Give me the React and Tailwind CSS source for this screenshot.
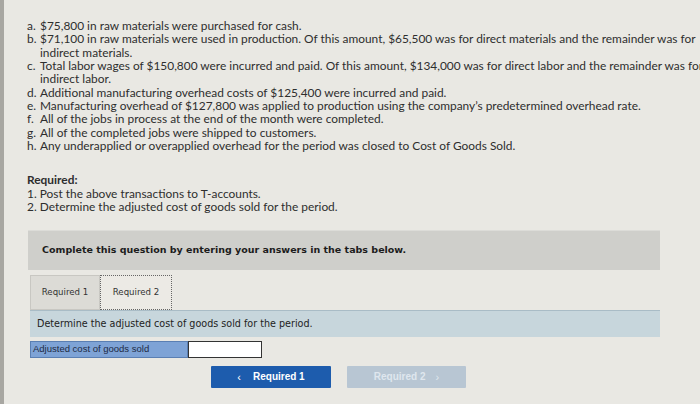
export default function App() {
  const items = [
    ['a.', ['$75,800 in raw materials were purchased for cash.']],
    ['b.', ['$71,100 in raw materials were used in production. Of this amount, $65,500 was for direct materials and the remainder was for', 'indirect materials.']],
    ['c.', ['Total labor wages of $150,800 were incurred and paid. Of this amount, $134,000 was for direct labor and the remainder was for', 'indirect labor.']],
    ['d.', ['Additional manufacturing overhead costs of $125,400 were incurred and paid.']],
    ['e.', ['Manufacturing overhead of $127,800 was applied to production using the company’s predetermined overhead rate.']],
    ['f.', ['All of the jobs in process at the end of the month were completed.']],
    ['g.', ['All of the completed jobs were shipped to customers.']],
    ['h.', ['Any underapplied or overapplied overhead for the period was closed to Cost of Goods Sold.']],
  ];

  return (
    <div className="w-[700px] h-[404px] overflow-hidden bg-[#e9e8e3] flex">
      <div className="w-[4px] shrink-0 bg-[#a8a7a2]" />
      <div className="flex-1 min-w-0 flex flex-col pl-[23px] pt-[19px] text-[#2e2e2e] font-['Lato',sans-serif]">
        <ul className="text-[11.9px] leading-[13.35px] whitespace-nowrap">
          {items.map(([k, lines]) => (
            <li key={k} className="flex">
              <span className="w-[13px] shrink-0">{k}</span>
              <span className="flex flex-col">
                {lines.map((l) => (
                  <span key={l}>{l}</span>
                ))}
              </span>
            </li>
          ))}
        </ul>

        <div className="mt-[21px] text-[11.9px] leading-[13.5px]">
          <p className="font-bold">Required:</p>
          <p>1. Post the above transactions to T-accounts.</p>
          <p>2. Determine the adjusted cost of goods sold for the period.</p>
        </div>

        <div className="mt-[16px] ml-[1px] w-[632px] h-[40px] bg-[#cfcfcb] border-t border-[#dcdcd8] flex items-center pl-[14px] font-['DejaVu_Sans',sans-serif] font-bold text-[9.5px] text-[#1c1c1c]">
          Complete this question by entering your answers in the tabs below.
        </div>

        <div className="mt-[5px] ml-[3px] flex font-['DejaVu_Sans',sans-serif] text-[8.6px] text-[#333]">
          <div className="w-[70px] h-[35px] bg-[#dcdbd6] border border-[#c8c7c2] flex items-center justify-center">Required 1</div>
          <div className="w-[72px] h-[35px] bg-[#eceae5] border border-dotted border-[#666] flex items-center justify-center">Required 2</div>
        </div>

        <div className="ml-[3px] w-[630px] h-[27px] bg-[#c7d6dc] border-t border-[#a9bcc6] flex items-center pl-[7px] font-['DejaVu_Sans',sans-serif] text-[9.6px] text-[#222]">
          Determine the adjusted cost of goods sold for the period.
        </div>

        <div className="mt-[4px] ml-[3px] flex h-[17px]">
          <div className="w-[158px] bg-[#7ea3d6] border border-[#5a7fb3] flex items-center pl-[2px] font-['Liberation_Sans',sans-serif] text-[9.5px] text-[#1d2a44]">
            Adjusted cost of goods sold
          </div>
          <div className="w-[74px] bg-white border border-[#333]" />
        </div>

        <div className="mt-[8px] ml-[184px] flex gap-[16px] font-['Liberation_Sans',sans-serif] font-bold text-[10px]">
          <div className="w-[120px] h-[22px] bg-[#1d5cad] rounded-[1px] flex items-center justify-center gap-[12px] text-white">
            <span className="text-[11px] font-normal">‹</span>
            <span>Required 1</span>
          </div>
          <div className="w-[119px] h-[22px] bg-[#b8c6d3] rounded-[1px] flex items-center justify-center gap-[10px] text-[#dfe6ee]">
            <span>Required 2</span>
            <span className="text-[11px] font-normal">›</span>
          </div>
        </div>
      </div>
    </div>
  );
}
